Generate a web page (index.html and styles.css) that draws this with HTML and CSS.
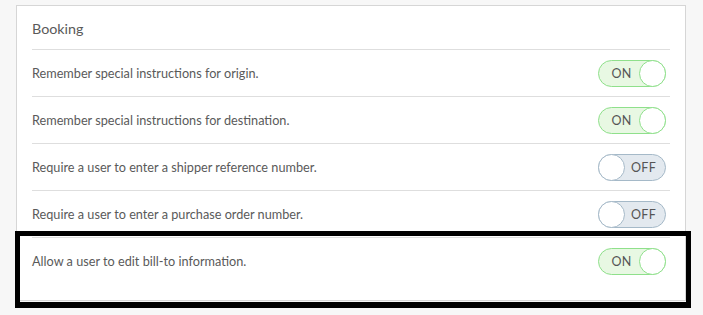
FILE: index.html
```html
<!DOCTYPE html>
<html lang="en">
<head>
    <meta charset="UTF-8">
    <meta name="viewport" content="width=device-width, initial-scale=1.0">
    <title>Booking settings</title>
    <link rel="stylesheet" href="styles.css">
</head>
<body>
    <div class="page">
        <div class="card">
            <div class="card-title">Booking</div>
            <ul class="settings">
                <li>
                    <span>Remember special instructions for origin.</span>
                    <span class="toggle on"><b>ON</b><i></i></span>
                </li>
                <li>
                    <span>Remember special instructions for destination.</span>
                    <span class="toggle on"><b>ON</b><i></i></span>
                </li>
                <li>
                    <span>Require a user to enter a shipper reference number.</span>
                    <span class="toggle off"><i></i><b>OFF</b></span>
                </li>
                <li>
                    <span>Require a user to enter a purchase order number.</span>
                    <span class="toggle off"><i></i><b>OFF</b></span>
                </li>
                <li>
                    <span>Allow a user to edit bill-to information.</span>
                    <span class="toggle on"><b>ON</b><i></i></span>
                </li>
            </ul>
            <!-- highlight round the last row -->
            <div class="highlight"></div>
        </div>
    </div>
</body>
</html>
```

FILE: styles.css
```css
html, body{
    margin: 0;
    padding: 0;
    background: #f7f7f7;
}
.page{
    padding: 5px 18px 15px 16px;
}
.card{
    position: relative;
    box-sizing: border-box;
    width: 670px;
    padding: 0 15px 16px;
    background: #fff;
    border: 1px solid #d6d6d6;
    font-family: Lato, "Open Sans", sans-serif;
    color: #5a5a5a;
}
.card-title{
    height: 43px;
    line-height: 46px;
    font-size: 14.3px;
    border-bottom: 1px solid #dedede;
}
.settings{
    margin: 0;
    padding: 0;
    list-style: none;
}
.settings li{
    display: flex;
    align-items: center;
    justify-content: space-between;
    height: 46px;
    padding-right: 4px;
    border-bottom: 1px solid #dedede;
    font-size: 12.7px;
}
.settings li:last-child{
    border-bottom: none;
}
.toggle{
    display: flex;
    align-items: center;
    box-sizing: border-box;
    width: 68px;
    height: 27px;
    border-radius: 14px;
    border: 1px solid;
    font-size: 12.5px;
}
.toggle b{
    flex: 1;
    font-weight: normal;
    text-align: center;
    color: #555;
    letter-spacing: 0.3px;
}
.toggle i{
    box-sizing: border-box;
    width: 27px;
    height: 27px;
    margin: -1px;
    border-radius: 50%;
    border: 1px solid;
    background: #fff;
}
.toggle.on{
    background: #e8f8e3;
    border-color: #8fe08b;
}
.toggle.on i{
    border-color: #8fe08b;
}
.toggle.on b{
    padding-left: 4px;
}
.toggle.off{
    background: #e3e9ef;
    border-color: #a5b9c8;
}
.toggle.off i{
    border-color: #a5b9c8;
}
.toggle.off b{
    padding-right: 2px;
}
.highlight{
    position: absolute;
    left: -2px;
    right: -6px;
    top: 225px;
    height: 66px;
    border: 5px solid #000;
    border-bottom-width: 6px;
}
```
